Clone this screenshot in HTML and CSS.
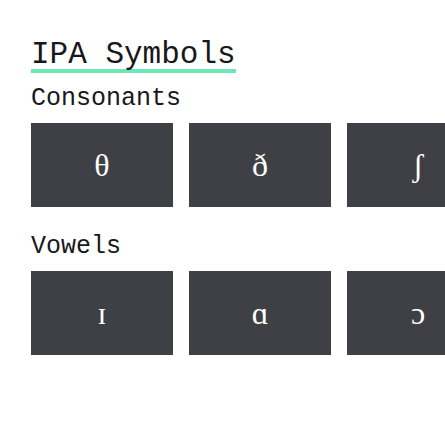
FILE: index.html
```html
<!DOCTYPE html>
<html lang="en">
<head>
<meta charset="utf-8">
<title>IPA Symbols</title>
<link rel="stylesheet" href="styles.css">
</head>
<body>
<main class="page">
  <h1 class="title">IPA Symbols</h1>
  <section class="group">
    <h2 class="group-title">Consonants</h2>
    <div class="cards">
      <button class="card">θ</button>
      <button class="card">ð</button>
      <button class="card">ʃ</button>
    </div>
  </section>
  <section class="group group-vowels">
    <h2 class="group-title">Vowels</h2>
    <div class="cards">
      <button class="card">ɪ</button>
      <button class="card">ɑ</button>
      <button class="card">ɔ</button>
    </div>
  </section>
</main>
</body>
</html>
```
FILE: styles.css
```css
html, body {
  margin: 0;
  padding: 0;
  background: #ffffff;
}

.page {
  padding: 41px 0 0 31px;
  font-family: "Liberation Mono", "DejaVu Sans Mono", monospace;
  color: #18181b;
}

.title {
  display: inline-block;
  margin: 0;
  font-size: 31px;
  font-weight: 400;
  line-height: 28px;
  border-bottom: 4px solid #6ee7b7;
}

.group {
  margin-top: 11px;
}

.group-vowels {
  margin-top: 25px;
}

.group-title {
  margin: 0 0 9px 0;
  font-size: 25px;
  font-weight: 400;
  line-height: 30px;
}

.cards {
  display: flex;
  gap: 16px;
  overflow: hidden;
}

.card {
  flex: 0 0 142px;
  height: 84px;
  margin: 0;
  padding: 0;
  border: 0;
  border-radius: 0;
  background: #3f3f46;
  color: #ffffff;
  font-family: "Liberation Serif", "DejaVu Serif", serif;
  font-size: 32px;
  line-height: 84px;
  text-align: center;
}
```
